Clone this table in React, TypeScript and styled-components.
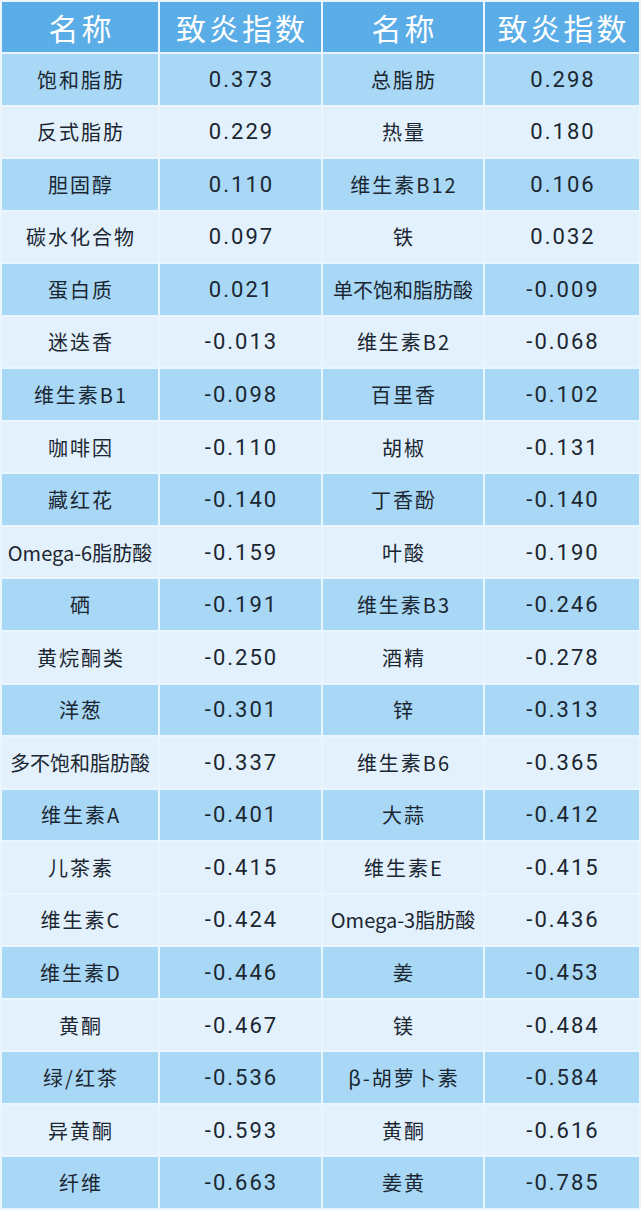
import React from "react";
import styled, { createGlobalStyle } from "styled-components";

const Global = createGlobalStyle`
  html, body { margin: 0; padding: 0; background: #eaf5fd; }
  * { box-sizing: border-box; }
`;

type Row = { l: string; lv: string; r: string; rv: string; shade: boolean };

const rows: Row[] = [
  { l: "饱和脂肪", lv: "0.373", r: "总脂肪", rv: "0.298", shade: true },
  { l: "反式脂肪", lv: "0.229", r: "热量", rv: "0.180", shade: false },
  { l: "胆固醇", lv: "0.110", r: "维生素B12", rv: "0.106", shade: true },
  { l: "碳水化合物", lv: "0.097", r: "铁", rv: "0.032", shade: false },
  { l: "蛋白质", lv: "0.021", r: "单不饱和脂肪酸", rv: "-0.009", shade: true },
  { l: "迷迭香", lv: "-0.013", r: "维生素B2", rv: "-0.068", shade: false },
  { l: "维生素B1", lv: "-0.098", r: "百里香", rv: "-0.102", shade: true },
  { l: "咖啡因", lv: "-0.110", r: "胡椒", rv: "-0.131", shade: false },
  { l: "藏红花", lv: "-0.140", r: "丁香酚", rv: "-0.140", shade: true },
  { l: "Omega-6脂肪酸", lv: "-0.159", r: "叶酸", rv: "-0.190", shade: false },
  { l: "硒", lv: "-0.191", r: "维生素B3", rv: "-0.246", shade: true },
  { l: "黄烷酮类", lv: "-0.250", r: "酒精", rv: "-0.278", shade: false },
  { l: "洋葱", lv: "-0.301", r: "锌", rv: "-0.313", shade: true },
  { l: "多不饱和脂肪酸", lv: "-0.337", r: "维生素B6", rv: "-0.365", shade: false },
  { l: "维生素A", lv: "-0.401", r: "大蒜", rv: "-0.412", shade: true },
  { l: "儿茶素", lv: "-0.415", r: "维生素E", rv: "-0.415", shade: false },
  { l: "维生素C", lv: "-0.424", r: "Omega-3脂肪酸", rv: "-0.436", shade: false },
  { l: "维生素D", lv: "-0.446", r: "姜", rv: "-0.453", shade: true },
  { l: "黄酮", lv: "-0.467", r: "镁", rv: "-0.484", shade: false },
  { l: "绿/红茶", lv: "-0.536", r: "β-胡萝卜素", rv: "-0.584", shade: true },
  { l: "异黄酮", lv: "-0.593", r: "黄酮", rv: "-0.616", shade: false },
  { l: "纤维", lv: "-0.663", r: "姜黄", rv: "-0.785", shade: true },
];

const Table = styled.div`
  width: 641px;
  height: 1210px;
  display: grid;
  grid-template-columns: 156px 161px 160px 154px;
  grid-template-rows: 50px repeat(22, 1fr);
  gap: 2px;
  padding: 2px;
  background: #eaf5fd;
`;

const HeadCell = styled.div`
  background: #5aade6;
  color: #ffffff;
  display: flex;
  align-items: center;
  justify-content: center;
  font-family: "Noto Sans CJK SC", "Noto Sans", sans-serif;
  font-size: 30px;
  font-weight: 400;
  letter-spacing: 3px;
  padding-left: 3px;
`;

const Cell = styled.div<{ $shade: boolean }>`
  background: ${(p) => (p.$shade ? "#a8d8f6" : "#e2f1fc")};
  color: #1b2631;
  display: flex;
  align-items: center;
  justify-content: center;
  white-space: nowrap;
  overflow: hidden;
`;

const Name = styled.span<{ $tight: boolean }>`
  font-family: "Noto Sans CJK SC", "Noto Sans", sans-serif;
  font-size: 20px;
  font-weight: 400;
  letter-spacing: ${(p) => (p.$tight ? "0px" : "2px")};
  margin-right: ${(p) => (p.$tight ? "0px" : "-2px")};
`;

const Num = styled.span`
  font-family: "Roboto", "Liberation Sans", sans-serif;
  font-size: 22px;
  font-weight: 400;
  letter-spacing: 2px;
  margin-right: -2px;
`;

const isTight = (s: string) => s.length >= 7;

export default function App() {
  return (
    <>
      <Global />
      <Table>
        <HeadCell>名称</HeadCell>
        <HeadCell>致炎指数</HeadCell>
        <HeadCell>名称</HeadCell>
        <HeadCell>致炎指数</HeadCell>
        {rows.map((r, i) => (
          <React.Fragment key={i}>
            <Cell $shade={r.shade}>
              <Name $tight={isTight(r.l)}>{r.l}</Name>
            </Cell>
            <Cell $shade={r.shade}>
              <Num>{r.lv}</Num>
            </Cell>
            <Cell $shade={r.shade}>
              <Name $tight={isTight(r.r)}>{r.r}</Name>
            </Cell>
            <Cell $shade={r.shade}>
              <Num>{r.rv}</Num>
            </Cell>
          </React.Fragment>
        ))}
      </Table>
    </>
  );
}
